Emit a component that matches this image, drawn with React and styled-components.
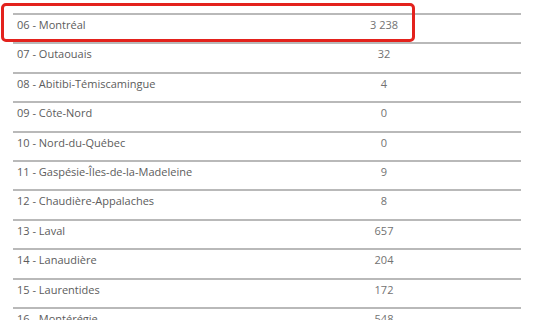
import React from "react";
import styled, { createGlobalStyle } from "styled-components";

const rows = [
  ["06 - Montréal", "3 238"],
  ["07 - Outaouais", "32"],
  ["08 - Abitibi-Témiscamingue", "4"],
  ["09 - Côte-Nord", "0"],
  ["10 - Nord-du-Québec", "0"],
  ["11 - Gaspésie-Îles-de-la-Madeleine", "9"],
  ["12 - Chaudière-Appalaches", "8"],
  ["13 - Laval", "657"],
  ["14 - Lanaudière", "204"],
  ["15 - Laurentides", "172"],
  ["16 - Montérégie", "548"],
];

function App() {
  return (
    <>
      <GlobalStyle />
      <Page>
        <Table>
          {rows.map(([region, cases]) => (
            <Row key={region}>
              <Region>{region}</Region>
              <Count>{cases}</Count>
            </Row>
          ))}
        </Table>
        <Highlight />
      </Page>
    </>
  );
}

export default App;

const GlobalStyle = createGlobalStyle`
  body {
    margin: 0;
    background: #fff;
    font-family: "Open Sans", "Liberation Sans", sans-serif;
  }
`;

const Page = styled.div`
  position: relative;
  width: 540px;
  height: 320px;
  overflow: hidden;
  padding: 13px 0 0 13px;
  box-sizing: border-box;
`;

const Table = styled.div`
  width: 508px;
  display: flex;
  flex-direction: column;
`;

const Row = styled.div`
  display: grid;
  grid-template-columns: 234px 1fr;
  height: 29.4px;
  box-sizing: border-box;
  border-top: 2px solid #b9b9b9;
  padding-top: 2px;
  font-size: 11px;
  line-height: normal;
`;

const Region = styled.div`
  padding-left: 4px;
  color: #5c5c5c;
  white-space: nowrap;
`;

const Count = styled.div`
  text-align: center;
  color: #727272;
`;

const Highlight = styled.div`
  position: absolute;
  left: 1px;
  top: 3px;
  width: 414px;
  height: 39px;
  box-sizing: border-box;
  border: 3.5px solid #e3221d;
  border-radius: 5px;
`;
